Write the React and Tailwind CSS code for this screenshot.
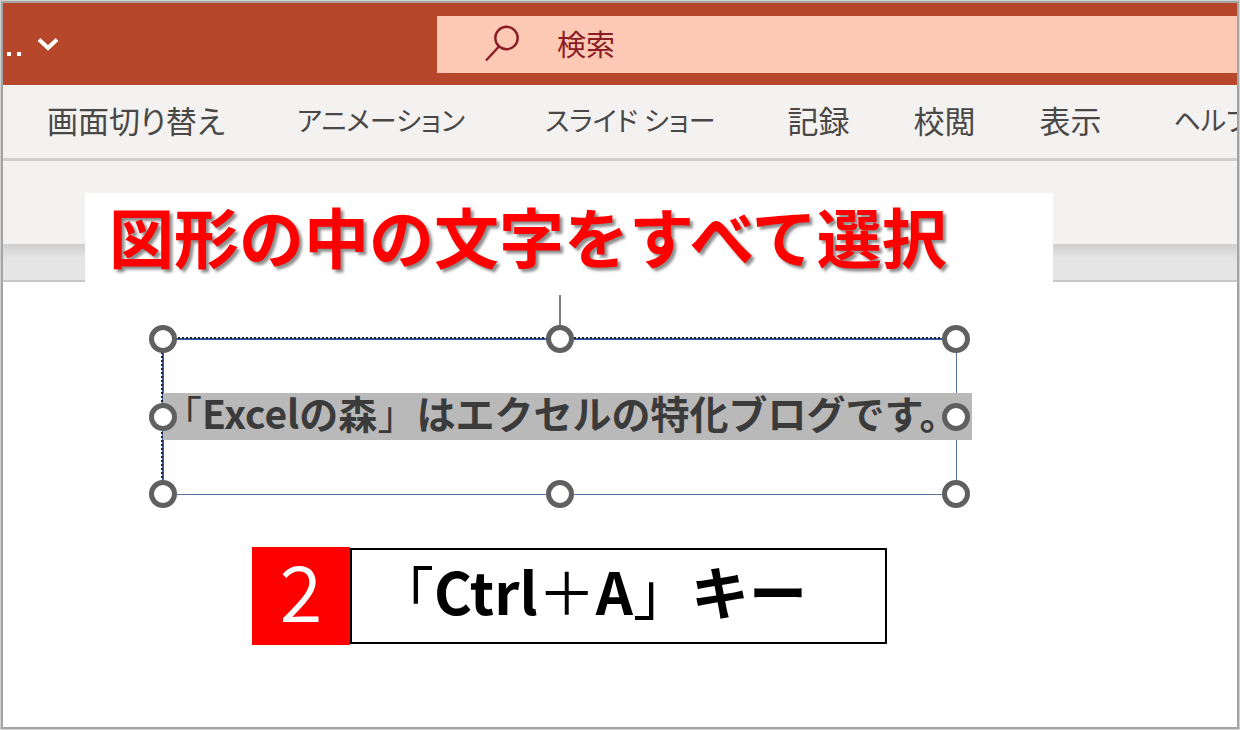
import { useState } from "react";

const TABS = [
  { label: "画面切り替え" },
  { label: "アニメーション", kana: true },
  { label: "スライド ショー", kana: true },
  { label: "記録" },
  { label: "校閲" },
  { label: "表示" },
  { label: "ヘルプ", kana: true },
];

const HANDLES = [
  "left-0 top-0",
  "left-1/2 top-0",
  "left-full top-0",
  "left-0 top-1/2",
  "left-full top-1/2",
  "left-0 top-full",
  "left-1/2 top-full",
  "left-full top-full",
];

function TitleBar() {
  const [query, setQuery] = useState("");

  return (
    <header className="flex h-[82px] items-center bg-[#b7472a]">
      <div className="flex w-[434px] shrink-0 items-center gap-4 pl-1 text-white">
        <span className="flex gap-1.5 pt-5">
          <span className="h-1 w-1 bg-white" />
          <span className="h-1 w-1 bg-white" />
        </span>
        <button type="button" aria-label="ファイル名のオプション">
          <svg width="22" height="14" viewBox="0 0 22 14" fill="none" stroke="currentColor" strokeWidth="4">
            <path d="M2 2.5 11 11 20 2.5" />
          </svg>
        </button>
      </div>
      <label className="flex h-[57px] min-w-0 flex-1 items-center bg-[#fdc9b5] pl-12 text-[#8a1c26]">
        <svg
          width="36"
          height="38"
          viewBox="0 0 36 38"
          fill="none"
          stroke="currentColor"
          strokeWidth="2.4"
          className="shrink-0"
          aria-hidden="true"
        >
          <circle cx="21.5" cy="13" r="11.2" />
          <path d="M14 21.5 1 35.5" />
        </svg>
        <input
          type="text"
          aria-label="検索"
          placeholder="検索"
          value={query}
          onChange={(e) => setQuery(e.target.value)}
          className="ml-9 min-w-0 flex-1 bg-transparent text-[29px] outline-none placeholder:text-[#8a1c26]"
        />
      </label>
    </header>
  );
}

function RibbonTabs() {
  return (
    <nav className="flex h-[76px] items-center gap-16 overflow-hidden border-b-3 border-[#d0cfcd] bg-[#f3f2f1] pb-0.5 pl-11">
      {TABS.map((tab) => (
        <button
          key={tab.label}
          type="button"
          className={`shrink-0 whitespace-nowrap text-[#4a4846] [font-feature-settings:'palt'] ${
            tab.kana ? "px-2 text-[27px]" : "text-[31px]"
          }`}
        >
          {tab.label}
        </button>
      ))}
    </nav>
  );
}

function SelectedShape() {
  return (
    <div className="relative ml-[159px] mt-14 flex h-[157px] w-[795px] items-center border border-[#56729f]">
      <span className="absolute -top-px inset-x-0 border-t-2 border-[#2f5eb0]" />
      <span className="absolute -left-px inset-y-0 border-l-2 border-[#2f5eb0]" />
      <span className="absolute -top-0.5 inset-x-0 border-t-2 border-dotted border-[#222222]" />
      <span className="absolute -left-0.5 inset-y-0 border-l-2 border-dotted border-[#222222]" />
      <span className="absolute bottom-full left-1/2 h-11 w-0.5 -translate-x-1/2 bg-[#7f7f7f]" />
      <p className="relative -mr-4 flex-1 whitespace-nowrap bg-[#b9b9b9] pb-2 text-[39px] leading-[39px] font-bold text-[#3b3b3b]">
        <span className="font-normal">「</span>Excelの森<span className="font-normal">」</span>
        はエクセルの特化ブログです。
      </p>
      {HANDLES.map((place) => (
        <span
          key={place}
          className={`absolute h-7 w-7 -translate-1/2 rounded-full border-5 border-[#606060] bg-white ${place}`}
        />
      ))}
    </div>
  );
}

function Step() {
  return (
    <div className="ml-[249px] mt-[52px] flex h-[98px] w-[635px] items-stretch">
      <div className="flex w-[98px] items-center justify-center bg-[#ff0000] pb-4 text-[78px] leading-none font-[350] text-white">
        2
      </div>
      <p className="my-px flex flex-1 items-center whitespace-nowrap border-2 border-black pb-3 pl-6 text-[58px] leading-none font-bold text-black">
        <span className="font-normal">「</span>Ctrl
        <span className="font-normal">＋</span>A
        <span className="font-normal">」</span>キー
      </p>
    </div>
  );
}

export default function App() {
  return (
    <div className="flex min-h-screen flex-col bg-[#d2d2d2] p-px font-['Noto_Sans_CJK_JP',sans-serif]">
      <div className="relative flex flex-1 flex-col overflow-hidden border-2 border-[#a3a3a3] bg-white">
        <TitleBar />
        <RibbonTabs />
        <div className="h-[83px] bg-[#f3f2f1]" />
        <div className="h-[38px] border-b-2 border-[#c8c8c8] bg-linear-to-b from-[#cfcfcf] to-[#e5e5e5] to-40%" />
        <main className="flex-1">
          <SelectedShape />
          <Step />
        </main>
        <h1 className="absolute left-[82px] top-[190px] w-[968px] whitespace-nowrap bg-white pb-1 pl-6 text-[65px] leading-[85px] font-bold text-[#ff0000] [text-shadow:3px_3px_3px_rgba(0,0,0,0.45)]">
          図形の中の文字をすべて選択
        </h1>
      </div>
    </div>
  );
}
